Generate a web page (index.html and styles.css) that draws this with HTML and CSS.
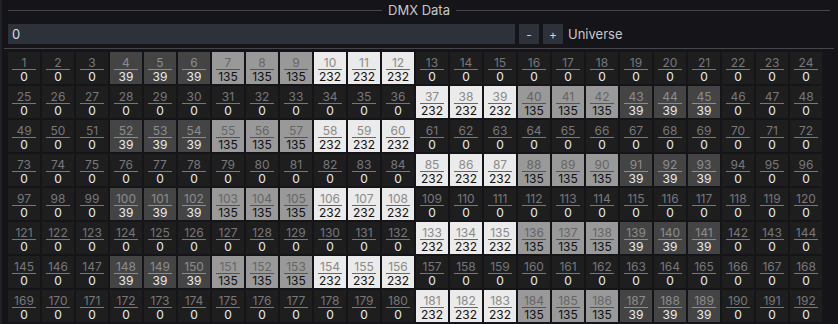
FILE: index.html
```html
<!DOCTYPE html>
<html lang="en">
<head>
  <meta charset="UTF-8">
  <title>DMX Data</title>
  <link rel="stylesheet" href="styles.css">
</head>
<body>

  <div class="panel">
    <div class="panel-title">
      <span class="rule"></span>
      <span class="title-text">DMX Data</span>
      <span class="rule"></span>
    </div>

    <div class="universe-row">
      <input type="text" id="universe" class="universe-input" value="0">
      <button class="step-btn" id="universe-down">-</button>
      <button class="step-btn" id="universe-up">+</button>
      <label for="universe" class="universe-label">Universe</label>
    </div>

    <div class="dmx-box">
      <div class="dmx-grid" id="dmx-grid"></div>
    </div>
  </div>

  <script>
    // test pattern, repeats every 48 channels
    function levelFor(ch) {
      const i = (ch - 1) % 48;
      if (i >= 3 && i <= 5) return 39;
      if (i >= 6 && i <= 8) return 135;
      if (i >= 9 && i <= 11) return 232;
      if (i >= 36 && i <= 38) return 232;
      if (i >= 39 && i <= 41) return 135;
      if (i >= 42 && i <= 44) return 39;
      return 0;
    }

    const grid = document.getElementById("dmx-grid");
    for (let ch = 1; ch <= 192; ch++) {
      const value = levelFor(ch);
      const cell = document.createElement("div");
      cell.className = "cell level-" + value;
      cell.innerHTML = '<span class="ch">' + ch + '</span><span class="val">' + value + '</span>';
      grid.appendChild(cell);
    }
  </script>

</body>
</html>
```

FILE: styles.css
```css
/* Reset */
* {
  margin: 0;
  padding: 0;
  box-sizing: border-box;
}

body {
  font-family: 'Inter', 'Liberation Sans', sans-serif;
  background: #141419;
  color: #d0d0d4;
  height: 100vh;
  overflow: hidden;
  box-shadow: inset 2px 0 0 #212126;
}

/* Title with rules either side */
.panel-title {
  display: flex;
  align-items: center;
  gap: 6px;
  height: 20px;
  padding: 0 8px;
}

.rule {
  flex: 1;
  height: 1px;
  background: #45454b;
}

.title-text {
  font-size: 13px;
  color: #c8c8cc;
  line-height: 20px;
}

/* Universe selector */
.universe-row {
  display: flex;
  align-items: center;
  gap: 4px;
  padding: 0 8px;
  margin-top: 4px;
  height: 20px;
}

.universe-input {
  width: 507px;
  height: 20px;
  background: #2d313a;
  border: none;
  color: #dcdce0;
  font-family: inherit;
  font-size: 13px;
  padding: 0 4px;
  outline: none;
}

.step-btn {
  width: 20px;
  height: 20px;
  background: #2d313a;
  border: none;
  color: #d0d0d4;
  font-family: inherit;
  font-size: 12px;
  cursor: pointer;
}

.universe-label {
  font-size: 13px;
  color: #c8c8cc;
  margin-left: 1px;
}

/* Channel grid */
.dmx-box {
  margin: 4px 4px 0;
  border-top: 1px solid #45454b;
  padding: 3px 4px;
}

.dmx-grid {
  display: grid;
  grid-template-columns: repeat(24, 32px);
  grid-auto-rows: 32px;
  gap: 2px;
}

.cell {
  display: flex;
  flex-direction: column;
  align-items: center;
  background: #1e1e1f;
  font-size: 12px;
}

.ch {
  width: 24px;
  text-align: center;
  line-height: 13px;
  margin-top: 4px;
  color: #77777a;
  border-bottom: 1px solid #77777a;
}

.val {
  line-height: 13px;
  color: #ececec;
}

.level-39 { background: #444444; }
.level-39 .ch { color: #8c8c8c; border-color: #8c8c8c; }

.level-135 { background: #999999; }
.level-135 .ch { color: #666666; border-color: #555555; }
.level-135 .val { color: #111111; }

.level-232 { background: #ebebeb; }
.level-232 .ch { color: #8a8a8a; border-color: #666666; }
.level-232 .val { color: #111111; }
```
